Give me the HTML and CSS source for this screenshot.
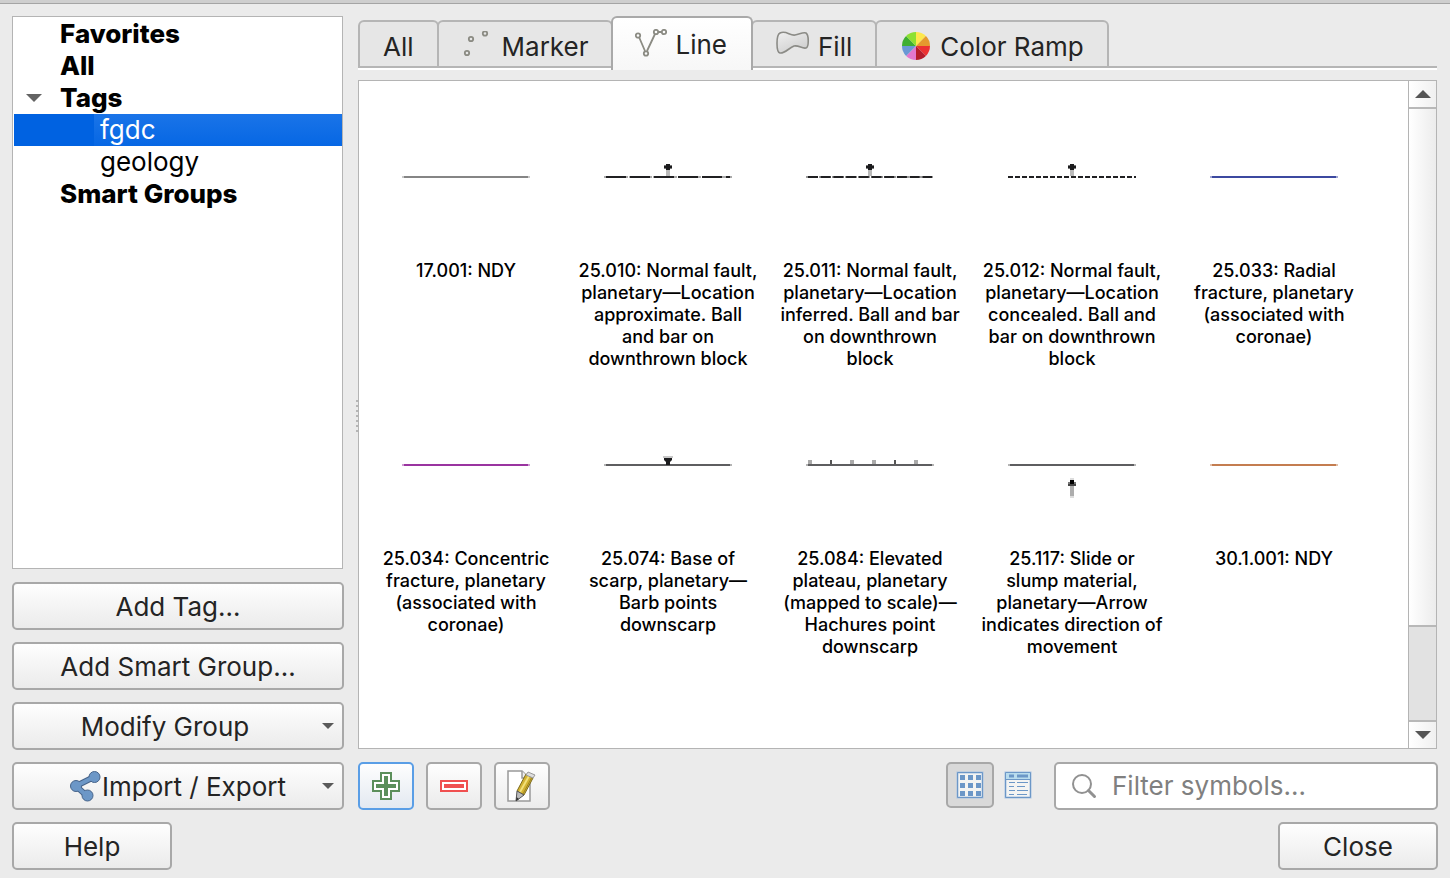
FILE: index.html
```html
<!DOCTYPE html>
<html lang="en">
<head>
<meta charset="utf-8">
<title>Style Manager</title>
<link rel="stylesheet" href="styles.css">
</head>
<body>
<div class="titlebar-edge"></div>
<main class="dialog">
  <aside class="sidebar">
    <ul class="tree">
      <li class="tree-item group">Favorites</li>
      <li class="tree-item group">All</li>
      <li class="tree-item group expanded">
        <svg class="expander" width="16" height="8" viewBox="0 0 16 8"><path d="M0 0H16L8 8Z" fill="#636363"/></svg>Tags</li>
      <li class="tree-item tag selected"><span class="tag-name">fgdc</span></li>
      <li class="tree-item tag"><span class="tag-name">geology</span></li>
      <li class="tree-item group">Smart Groups</li>
    </ul>
    <button class="button" type="button">Add Tag…</button>
    <button class="button" type="button">Add Smart Group…</button>
    <button class="button menu-button modify" type="button">Modify Group
      <svg class="menu-arrow" width="12" height="6" viewBox="0 0 12 6"><path d="M0 0H12L6 6Z" fill="#5a5a5a"/></svg>
    </button>
    <button class="button menu-button" type="button">
      <svg width="32" height="32" viewBox="0 0 32 32">
        <path d="M6 15L24 6M6 15L17 25" stroke="#47648a" stroke-width="6" fill="none"/>
        <g fill="#6c97c7" stroke="#47648a"><circle cx="6" cy="15" r="5.500"/><circle cx="24.500" cy="6" r="5.500"/><circle cx="17.500" cy="24.500" r="5.500"/></g>
        <path d="M6 15L24 6M6 15L17 25" stroke="#6c97c7" stroke-width="4" fill="none"/>
      </svg>Import / Export
      <svg class="menu-arrow" width="12" height="6" viewBox="0 0 12 6"><path d="M0 0H12L6 6Z" fill="#5a5a5a"/></svg>
    </button>
  </aside>

  <div class="splitter"></div>

  <section class="content">
    <div class="tabs" role="tablist">
      <button class="tab" role="tab" type="button">All</button>
      <button class="tab" role="tab" type="button">
        <svg width="32" height="32" viewBox="0 0 32 32" fill="none" stroke="#8b8b83" stroke-width="1.800"><circle cx="5" cy="22" r="2.200"/><circle cx="9" cy="8" r="2.200"/><circle cx="23" cy="2.500" r="2.200"/></svg>Marker</button>
      <button class="tab active" role="tab" type="button" aria-selected="true">
        <svg width="32" height="32" viewBox="0 0 32 32" fill="none" stroke="#8b8b83" stroke-width="1.800"><path d="M4 8L10 22M12 22L20 5M23 3H27"/><circle cx="3" cy="6.500" r="2.200"/><circle cx="11" cy="24.500" r="2.200"/><circle cx="21" cy="3" r="2.200"/><circle cx="29" cy="3" r="2.200"/></svg>Line</button>
      <button class="tab" role="tab" type="button">
        <svg width="34" height="32" viewBox="0 0 34 32"><defs><linearGradient id="fill" x2="0.600" y2="1"><stop stop-color="#f0f0f0"/><stop offset="1" stop-color="#cfcfcf"/></linearGradient></defs><path d="M4 2C10 -1 14 5 19 4C24 3 27 1 30 2C33 4 33 16 30 17C26 18 23 14 18 15C13 17 8 23 4 22C0 21 0 4 4 2Z" fill="url(#fill)" stroke="#8b8b86" stroke-width="1.600"/></svg>Fill</button>
      <button class="tab" role="tab" type="button">
        <svg width="32" height="32" viewBox="-16 -15 32 32">
          <path d="M0 0V-14A14 14 0 0 1 9.900 -9.900Z" fill="#fde74c"/><path d="M0 0L9.900 -9.900A14 14 0 0 1 14 0Z" fill="#e59a2e"/>
          <path d="M0 0H14A14 14 0 0 1 9.900 9.900Z" fill="#ec3232"/><path d="M0 0L9.900 9.900A14 14 0 0 1 0 14Z" fill="#b51c2c"/>
          <path d="M0 0V14A14 14 0 0 1 -9.900 9.900Z" fill="#e377cf"/><path d="M0 0L-9.900 9.900A14 14 0 0 1 -14 0Z" fill="#6a98d4"/>
          <path d="M0 0H-14A14 14 0 0 1 -9.900 -9.900Z" fill="#3fae31"/><path d="M0 0L-9.900 -9.900A14 14 0 0 1 0 -14Z" fill="#8de031"/>
        </svg>Color Ramp</button>
    </div>

    <div class="symbol-view">
      <ul class="symbols">
        <li class="symbol">
          <svg class="preview" viewBox="0 0 128 100"><path d="M0 51H128" stroke="#c8c8c8" stroke-width="2"/><path d="M2 51H126" stroke="#858585" stroke-width="2"/></svg>
          <span>17.001: NDY</span></li>
        <li class="symbol">
          <svg class="preview" viewBox="0 0 128 100"><path d="M0 51H128" stroke="#aaa" stroke-width="2" stroke-dasharray="24 1 23 1"/><path d="M2 51H126" stroke="#202022" stroke-width="2" stroke-dasharray="20 4"/><path d="M62 44h4v6h-4z" fill="#bbb"/><path d="M60 39h8v4h-8z" fill="#777"/><path d="M62 38h4v6h-4zM60 40h8v2h-8z" fill="#1b1b1d"/></svg>
          <span>25.010: Normal fault,<br>planetary—Location<br>approximate. Ball<br>and bar on<br>downthrown block</span></li>
        <li class="symbol">
          <svg class="preview" viewBox="0 0 128 100"><path d="M0 51H127" stroke="#999" stroke-width="2" stroke-dasharray="12 1"/><path d="M2 51H126" stroke="#202022" stroke-width="2" stroke-dasharray="10 2.700"/><path d="M62 44h4v6h-4z" fill="#bbb"/><path d="M60 39h8v4h-8z" fill="#777"/><path d="M62 38h4v6h-4zM60 40h8v2h-8z" fill="#1b1b1d"/></svg>
          <span>25.011: Normal fault,<br>planetary—Location<br>inferred. Ball and bar<br>on downthrown<br>block</span></li>
        <li class="symbol">
          <svg class="preview" viewBox="0 0 128 100"><path d="M0 51H128" stroke="#202022" stroke-width="2" stroke-dasharray="5 2"/><path d="M62 44h4v6h-4z" fill="#bbb"/><path d="M60 39h8v4h-8z" fill="#777"/><path d="M62 38h4v6h-4zM60 40h8v2h-8z" fill="#1b1b1d"/></svg>
          <span>25.012: Normal fault,<br>planetary—Location<br>concealed. Ball and<br>bar on downthrown<br>block</span></li>
        <li class="symbol">
          <svg class="preview" viewBox="0 0 128 100"><path d="M0 51H128" stroke="#a0a6d2" stroke-width="2"/><path d="M2 51H126" stroke="#3c49a0" stroke-width="2"/></svg>
          <span>25.033: Radial<br>fracture, planetary<br>(associated with<br>coronae)</span></li>
        <li class="symbol">
          <svg class="preview" viewBox="0 0 128 100"><path d="M0 51H128" stroke="#cf9cd2" stroke-width="2"/><path d="M2 51H126" stroke="#9a34a0" stroke-width="2"/></svg>
          <span>25.034: Concentric<br>fracture, planetary<br>(associated with<br>coronae)</span></li>
        <li class="symbol">
          <svg class="preview" viewBox="0 0 128 100"><path d="M0 51H128" stroke="#b4b4b4" stroke-width="2"/><path d="M2 51H126" stroke="#5e5e60" stroke-width="2"/><path d="M59 42h10v2h-10z" fill="#c8c8c8"/><path d="M60 44h8v2l-2 2v3h-4v-3l-2-2z" fill="#1b1b1d"/></svg>
          <span>25.074: Base of<br>scarp, planetary—<br>Barb points<br>downscarp</span></li>
        <li class="symbol">
          <svg class="preview" viewBox="0 0 128 100"><path d="M0 51H128" stroke="#b4b4b4" stroke-width="2"/><path d="M2 51H126" stroke="#5e5e60" stroke-width="2"/><path d="M2 46h4v4h-4zM44 46h4v4h-4zM66 46h4v4h-4zM108 46h4v4h-4z" fill="#aaa"/><path d="M24 46h2v4h-2zM88 46h2v4h-2z" fill="#555"/></svg>
          <span>25.084: Elevated<br>plateau, planetary<br>(mapped to scale)—<br>Hachures point<br>downscarp</span></li>
        <li class="symbol">
          <svg class="preview" viewBox="0 0 128 100"><path d="M0 51H128" stroke="#b4b4b4" stroke-width="2"/><path d="M2 51H126" stroke="#5e5e60" stroke-width="2"/><path d="M62 64h4v20h-4z" fill="#ddd"/><path d="M62 71h4v11h-4z" fill="#adadad"/><path d="M60 68h8v4h-8z" fill="#777"/><path d="M62 66h4v4h-4z" fill="#000"/><path d="M60 70h8v2h-8z" fill="#444"/></svg>
          <span>25.117: Slide or<br>slump material,<br>planetary—Arrow<br>indicates direction of<br>movement</span></li>
        <li class="symbol">
          <svg class="preview" viewBox="0 0 128 100"><path d="M0 51H128" stroke="#e2bfa8" stroke-width="2"/><path d="M2 51H126" stroke="#c47d50" stroke-width="2"/></svg>
          <span>30.1.001: NDY</span></li>
      </ul>
      <div class="scrollbar">
        <button class="scroll-step up" type="button" aria-label="Scroll up"><svg width="16" height="8" viewBox="0 0 16 8"><path d="M0 8H16L8 0Z" fill="#555"/></svg></button>
        <div class="scroll-track"><div class="scroll-thumb"></div></div>
        <button class="scroll-step down" type="button" aria-label="Scroll down"><svg width="16" height="8" viewBox="0 0 16 8"><path d="M0 0H16L8 8Z" fill="#555"/></svg></button>
      </div>
    </div>

    <div class="toolbar">
      <button class="button tool default" type="button" aria-label="Add item">
        <svg width="28" height="28" viewBox="0 0 28 28"><path d="M9 1H19V9H27V19H19V27H9V19H1V9H9Z" fill="#fff" stroke="#5b8f5b" stroke-width="2"/><path d="M12 4h4v8h8v4h-8v8h-4v-8h-8v-4h8z" fill="#5b8f5b"/></svg></button>
      <button class="button tool" type="button" aria-label="Remove item">
        <svg width="28" height="28" viewBox="0 0 28 28"><path d="M1 9H27V19H1Z" fill="#fff" stroke="#f05050" stroke-width="2"/><path d="M4 12h20v4h-20z" fill="#f05050"/></svg></button>
      <button class="button tool" type="button" aria-label="Edit item">
        <svg width="32" height="36" viewBox="0 0 32 36"><path d="M2 3H16L24 11V33H2Z" fill="#fff" stroke="#999" stroke-width="1.500"/><path d="M16 3V10H23" fill="#eee" stroke="#999" stroke-width="1.500"/><path d="M11 23L20 6L27 10L18 27Z" fill="#d3b332" stroke="#7d6b1e"/><path d="M14 24L23 8" stroke="#f3e07a" stroke-width="2"/><path d="M17 26L25.500 10" stroke="#9c831f"/><path d="M11 23L18 27L10 33Z" fill="#bbb" stroke="#555"/><path d="M10.500 29L13 31L10 33Z" fill="#333"/><path d="M20 7L22 4L29 7L27 10Z" fill="#ddd" stroke="#999"/></svg></button>
      <div class="view-modes">
        <button class="mode pressed" type="button" aria-label="Icon view" aria-pressed="true">
          <svg width="28" height="28" viewBox="0 0 28 28"><path d="M1.500 1.500h25v25h-25z" fill="#f4f4f2" stroke="#a9c4e2" stroke-width="2"/><path d="M1.500 1.500h25v25h-25z" fill="none" stroke="#6c97c7"/><path d="M4 4h5v5H4zM12 4h5v5h-5zM20 4h5v5h-5zM4 12h5v5H4zM12 12h5v5h-5zM20 12h5v5h-5zM4 20h5v5H4zM12 20h5v5h-5zM20 20h5v5h-5z" fill="#6c97c7"/></svg></button>
        <button class="mode" type="button" aria-label="List view">
          <svg width="28" height="28" viewBox="0 0 28 28"><path d="M1.500 1.500h25v25h-25z" fill="#f4f4f2" stroke="#a9c4e2" stroke-width="2"/><path d="M1.500 1.500h25v7h-25z" fill="#b9dcee"/><path d="M1.500 1.500h25v25h-25zM1.500 8.500h25" fill="none" stroke="#6c97c7"/><path d="M5 3.500h5v3H5zM13 3.500h11v3H13z" fill="#6c97c7"/><path d="M5 11.500h6M13 11.500h11M5 15.500h5M13 15.500h8M5 19.500h6M13 19.500h11M5 23.500h5M13 23.500h10" stroke="#6c97c7"/></svg></button>
      </div>
      <label class="search">
        <svg width="26" height="26" viewBox="0 0 26 26" fill="none" stroke="#919191"><circle cx="11" cy="11" r="9" stroke-width="2"/><path d="M17.500 17.500L23.500 23.500" stroke-width="3" stroke-linecap="round"/></svg>
        <input class="search-input" type="text" placeholder="Filter symbols…" aria-label="Filter symbols">
      </label>
    </div>
  </section>
</main>
<footer class="footer">
  <button class="button action" type="button">Help</button>
  <button class="button action" type="button">Close</button>
</footer>
</body>
</html>
```
FILE: styles.css
```css
* { box-sizing: border-box; }

body {
  margin: 0;
  min-height: 100vh;
  display: flex;
  flex-direction: column;
  background: #ebebeb;
  color: #000;
  font: 26px/32px Inter, "Liberation Sans", sans-serif;
}

button, input { font: inherit; color: #242424; margin: 0; }
ul { list-style: none; margin: 0; padding: 0; }
svg { display: block; flex: none; }

.titlebar-edge {
  height: 4px;
  background: #cecece;
  border-bottom: 1px solid #a4a4a4;
}

.dialog {
  flex: 1;
  display: flex;
  padding: 12px 12px 0;
}

.sidebar {
  width: 332px;
  flex: none;
  display: flex;
  flex-direction: column;
  gap: 12px;
}

.tree {
  flex: 1;
  margin: 0 1px 1px 0;
  padding: 1px 0 0 1px;
  background: #fff;
  border: 1px solid #b4b4b4;
}

.tree-item { display: flex; align-items: center; height: 32px; }
.group { padding-left: 46px; font-weight: 800; }
.expanded { padding-left: 12px; gap: 18px; }
.tag { padding-left: 80px; }
.tag-name { flex: 1; padding-left: 6px; line-height: 32px; }
.selected { background: #0062e1; color: #fff; }
.selected .tag-name { background: linear-gradient(#1a74e8, #0667e4); }

.button {
  position: relative;
  display: flex;
  align-items: center;
  justify-content: center;
  height: 48px;
  padding: 1px 12px 0;
  border: 2px solid #a8a8a8;
  border-radius: 5px;
  background: linear-gradient(#fefefe, #ebebeb);
  white-space: nowrap;
}

.modify { padding-right: 38px; }
.menu-arrow { position: absolute; right: 8px; top: 19px; }

.splitter {
  width: 14px;
  flex: none;
  align-self: center;
  height: 34px;
  margin-top: 8px;
  background: repeating-linear-gradient(#b5b5b5 0 2px, transparent 2px 5px) right / 2px 100% no-repeat;
}

.content { flex: 1; min-width: 0; display: flex; flex-direction: column; }

.tabs {
  display: flex;
  align-items: flex-end;
  height: 54px;
  margin-right: 1px;
  background: linear-gradient(#b5b5b5 0 2px, #fff 2px 4px) 0 50px / 100% 4px no-repeat;
}

.tab {
  display: flex;
  align-items: center;
  justify-content: center;
  gap: 8px;
  height: 48px;
  margin: 0 0 2px -2px;
  padding: 5px 23px 0;
  border: 2px solid #b5b5b5;
  border-radius: 6px 6px 0 0;
  background: #e6e6e6;
  white-space: nowrap;
}
.tab:first-child { margin-left: 0; }
.tab.active {
  height: 54px;
  margin-bottom: 0;
  padding: 2px 24px 0 22px;
  border-color: #a9a9a9;
  border-bottom: 0;
  background: linear-gradient(#fff, #f7f7f7);
  z-index: 1;
}

.symbol-view {
  flex: 1;
  display: flex;
  margin: 10px 1px 13px 0;
  background: #fff;
  border: 1px solid #b4b4b4;
}

.symbols {
  flex: 1;
  display: grid;
  grid-template-columns: repeat(auto-fill, 202px);
  grid-auto-rows: 288px;
  padding: 45px 0 0 6px;
}

.symbol {
  display: flex;
  flex-direction: column;
  align-items: center;
  gap: 34px;
  font-size: 18px;
  line-height: 22px;
  font-weight: 500;
  text-align: center;
  white-space: nowrap;
}

.preview { width: 128px; height: 100px; }

.scrollbar {
  width: 28px;
  display: flex;
  flex-direction: column;
  border-left: 1px solid #b4b4b4;
}

.scroll-step {
  display: flex;
  align-items: center;
  justify-content: center;
  height: 28px;
  padding: 0;
  border: 0;
  background: linear-gradient(to right, #fff, #f0f0f0);
}
.up { border-bottom: 2px solid #b8b8b8; }
.down { border-top: 2px solid #b8b8b8; }

.scroll-track {
  flex: 1;
  display: flex;
  flex-direction: column;
  justify-content: flex-end;
  background: linear-gradient(to right, #fff, #ececec);
}

.scroll-thumb {
  height: 15.5%;
  border-top: 2px solid #b8b8b8;
  background: #e2e2e2;
}

.toolbar { display: flex; gap: 12px; height: 48px; }
.tool { width: 56px; padding: 0; }
.default { border-color: #5a9ee6; background: linear-gradient(#fefefe, #e3e9f1); }

.view-modes { display: flex; margin-left: auto; }
.mode {
  display: flex;
  align-items: center;
  justify-content: center;
  width: 48px;
  height: 46px;
  padding: 0;
  border: 2px solid transparent;
  border-radius: 5px;
  background: transparent;
}
.pressed { border-color: #a8a8a8; background: #d9d9d9; }

.search {
  display: flex;
  align-items: center;
  gap: 15px;
  width: 384px;
  padding: 0 15px;
  border: 2px solid #a8a8a8;
  border-radius: 5px;
  background: #fff;
}
.search-input {
  flex: 1;
  min-width: 0;
  padding: 0;
  border: 0;
  outline: 0;
  background: transparent;
}
.search-input::placeholder { color: #808080; opacity: 1; }

.footer {
  display: flex;
  justify-content: space-between;
  padding: 12px 12px 8px;
}
.action { width: 160px; }
```
